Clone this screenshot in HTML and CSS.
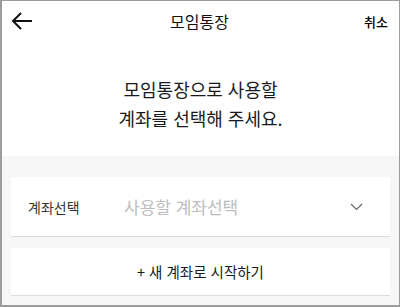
FILE: index.html
```html
<!DOCTYPE html>
<html lang="ko">
<head>
  <meta charset="UTF-8">
  <title>모임통장</title>
  <link rel="stylesheet" href="styles.css">
</head>
<body>
  <div class="screen">
    <div class="top">
      <div class="header">
        <span class="back">
          <svg width="22" height="18" viewBox="0 0 22 18"><path d="M21 9H2M10 1L2 9l8 8" fill="none" stroke="#111" stroke-width="2"/></svg>
        </span>
        <h1>모임통장</h1>
        <span class="cancel">취소</span>
      </div>
      <p class="guide">모임통장으로 사용할<br>계좌를 선택해 주세요.</p>
    </div>
    <div class="bottom">
      <div class="card select">
        <span class="label">계좌선택</span>
        <span class="placeholder">사용할 계좌선택</span>
        <svg class="chev" width="13" height="8" viewBox="0 0 13 8"><path d="M1 1l5.5 5.5L12 1" fill="none" stroke="#666" stroke-width="1.2"/></svg>
      </div>
      <div class="card new">+ 새 계좌로 시작하기</div>
    </div>
  </div>
</body>
</html>
```

FILE: styles.css
```css
html,body{
  margin: 0;
  padding: 0;
}
body{
  font-family: "Noto Sans CJK KR", "Noto Sans", sans-serif;
  color: #222;
}
.screen{
  width: 400px;
  height: 307px;
  box-sizing: border-box;
  border: 1px solid #9c9c9c;
  border-left-width: 2px;
  border-bottom-width: 2px;
  display: flex;
  flex-direction: column;
  overflow: hidden;
}
.top{
  background: #fff;
  height: 155px;
}
.header{
  height: 40px;
  display: flex;
  align-items: center;
  justify-content: space-between;
  padding: 0 11px 0 9px;
}
.back{
  width: 40px;
  display: flex;
}
.header h1{
  margin: 0;
  font-size: 16px;
  font-weight: 400;
  color: #111;
}
.cancel{
  width: 40px;
  text-align: right;
  font-size: 13px;
  font-weight: 500;
  color: #000;
}
.guide{
  margin: 34px 0 0;
  text-align: center;
  font-size: 18px;
  line-height: 29px;
  color: #1a1a1a;
}
.bottom{
  flex: 1;
  background: #f6f6f6;
  padding: 21px 9px 0 9px;
  display: flex;
  flex-direction: column;
  gap: 11px;
}
.card{
  background: #fff;
  border-bottom: 1px solid #dcdcdc;
}
.select{
  height: 59px;
  display: flex;
  align-items: center;
  padding: 0 27px 0 17px;
}
.label{
  width: 96px;
  font-size: 14px;
  color: #333;
}
.placeholder{
  flex: 1;
  font-size: 17px;
  color: #bdbdbd;
}
.new{
  height: 47px;
  display: flex;
  align-items: center;
  justify-content: center;
  font-size: 14.5px;
  color: #1a1a1a;
}
```
